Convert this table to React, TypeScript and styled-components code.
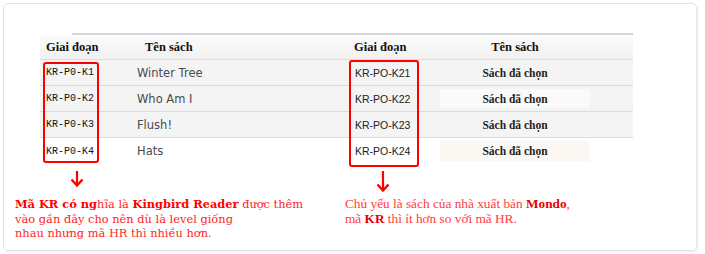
import styled, { createGlobalStyle } from "styled-components"

const GlobalStyle = createGlobalStyle`
    body {
        margin: 0;
        background: #fff;
        font-family: "Liberation Serif", serif;
    }
`

const Card = styled.div`
    position: relative;
    margin: 3px;
    width: 694px;
    height: 248px;
    border: 1px solid #e3e3e3;
    border-radius: 5px;
    box-shadow: 1px 1px 2px rgba(0, 0, 0, 0.08);
    box-sizing: border-box;
    padding-top: 29px;
`

const Tables = styled.div`
    display: flex;
    padding-left: 36px;
`

const Table = styled.div<{ $width: number; $lineFrom: number }>`
    position: relative;
    width: ${p => p.$width}px;
    &::before {
        content: "";
        display: block;
        height: 2px;
        margin-left: ${p => p.$lineFrom}px;
        background: #d6d6d6;
    }
`

const Row = styled.div<{ $cols: string; $head?: boolean; $last?: boolean }>`
    display: grid;
    grid-template-columns: ${p => p.$cols};
    align-items: center;
    height: ${p => (p.$head ? 25 : 26)}px;
    box-sizing: border-box;
    background: ${p =>
        p.$head ? "linear-gradient(#fbfbfb, #f1f1f1)" : p.$last ? "#fff" : "#f4f4f4"};
    border-bottom: ${p => (p.$last ? "none" : "1px solid #dcdcdc")};
    box-shadow: ${p => (p.$last ? "none" : "0 1px 0 #fff")};
`

const HeadCell = styled.div<{ $center?: boolean; $pad?: number }>`
    font-family: "Liberation Serif", serif;
    font-weight: bold;
    font-size: 12.5px;
    color: #111;
    padding-left: ${p => p.$pad ?? 0}px;
    text-align: ${p => (p.$center ? "center" : "left")};
`

const SerifCode = styled.div`
    font-family: "Liberation Mono", monospace;
    font-size: 10px;
    color: #111;
    padding-left: 6px;
`

const SansCode = styled.div`
    font-family: "Liberation Sans", sans-serif;
    font-size: 10.5px;
    color: #222;
    padding-left: 11px;
`

const Title = styled.div`
    font-family: "DejaVu Sans", sans-serif;
    font-size: 11.5px;
    color: #4a4a4a;
`

const Chosen = styled.div<{ $tint?: string }>`
    font-family: "Liberation Serif", serif;
    font-weight: bold;
    font-size: 11.5px;
    color: #222;
    text-align: center;
    align-self: stretch;
    display: flex;
    align-items: center;
    justify-content: center;
    margin: 3px 0;
    background: ${p => p.$tint ?? "transparent"};
`

const Marker = styled.div<{ $left: number; $top: number; $w: number; $h: number }>`
    position: absolute;
    left: ${p => p.$left}px;
    top: ${p => p.$top}px;
    width: ${p => p.$w}px;
    height: ${p => p.$h}px;
    border: 2px solid #f00;
    border-radius: 3px;
    box-sizing: border-box;
    pointer-events: none;
`

const Notes = styled.div`
    display: flex;
    padding-left: 11px;
    margin-top: 7px;
`

const Note = styled.div<{ $width: number; $arrowAt: number }>`
    width: ${p => p.$width}px;
    svg {
        display: block;
        margin-left: ${p => p.$arrowAt}px;
    }
`

const LeftText = styled.p`
    margin: 10px 0 0;
    font-family: "DejaVu Serif", serif;
    font-size: 11.4px;
    line-height: 14.5px;
    color: #ff2424;
    b {
        color: #f00;
    }
`

const RightText = styled.p`
    margin: 4px 0 0;
    font-family: "Liberation Serif", serif;
    font-size: 13.3px;
    line-height: 15px;
    color: #ff3c3c;
    b {
        color: #e80000;
    }
`

function DownArrow({ length }: { length: number }) {
    return (
        <svg width="14" height={length} viewBox={`0 0 14 ${length}`}>
            <line x1="7" y1="0" x2="7" y2={length - 2} stroke="#f00" strokeWidth="2.2" />
            <polyline
                points={`1.5,${length - 7.5} 7,${length - 1.5} 12.5,${length - 7.5}`}
                fill="none"
                stroke="#f00"
                strokeWidth="2.4"
            />
        </svg>
    )
}

const leftRows = [
    ["KR-P0-K1", "Winter Tree"],
    ["KR-P0-K2", "Who Am I"],
    ["KR-P0-K3", "Flush!"],
    ["KR-P0-K4", "Hats"],
]

const rightRows = ["KR-PO-K21", "KR-PO-K22", "KR-PO-K23", "KR-PO-K24"]
const tints = [undefined, "#fafafa", undefined, "#fbf8f4"]

export default function App() {
    const leftCols = "97px 1fr"
    const rightCols = "96px 150px 1fr"

    return (
        <>
            <GlobalStyle />
            <Card>
                <Tables>
                    <Table $width={304} $lineFrom={32}>
                        <Row $cols={leftCols} $head>
                            <HeadCell $pad={6}>Giai đoạn</HeadCell>
                            <HeadCell $pad={8}>Tên sách</HeadCell>
                        </Row>
                        {leftRows.map(([code, title], i) => (
                            <Row key={code} $cols={leftCols} $last={i === leftRows.length - 1}>
                                <SerifCode>{code}</SerifCode>
                                <Title>{title}</Title>
                            </Row>
                        ))}
                        <Marker $left={3} $top={29} $w={56} $h={101} />
                    </Table>
                    <Table $width={289} $lineFrom={0}>
                        <Row $cols={rightCols} $head>
                            <HeadCell $pad={10}>Giai đoạn</HeadCell>
                            <HeadCell $center>Tên sách</HeadCell>
                            <span />
                        </Row>
                        {rightRows.map((code, i) => (
                            <Row key={code} $cols={rightCols} $last={i === rightRows.length - 1}>
                                <SansCode>{code}</SansCode>
                                <Chosen $tint={tints[i]}>Sách đã chọn</Chosen>
                                <span />
                            </Row>
                        ))}
                        <Marker $left={5} $top={27} $w={70} $h={107} />
                    </Table>
                </Tables>
                <Notes>
                    <Note $width={330} $arrowAt={55}>
                        <DownArrow length={16} />
                        <LeftText>
                            <b>Mã KR có ng</b>hĩa là <b>Kingbird Reader</b> được thêm
                            <br />
                            vào gần đây cho nên dù là level giống
                            <br />
                            nhau nhưng mã HR thì nhiều hơn.
                        </LeftText>
                    </Note>
                    <Note $width={300} $arrowAt={31}>
                        <DownArrow length={21} />
                        <RightText>
                            Chủ yếu là sách của nhà xuất bản <b>Mondo</b>,
                            <br />
                            mã <b>KR</b> thì ít hơn so với mã HR.
                        </RightText>
                    </Note>
                </Notes>
            </Card>
        </>
    )
}
